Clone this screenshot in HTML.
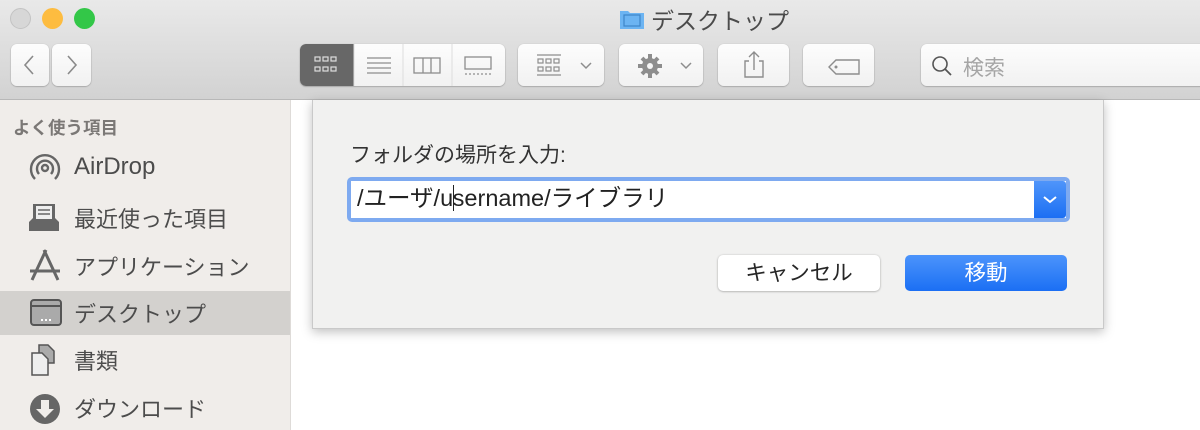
<!DOCTYPE html>
<html><head><meta charset="utf-8"><style>
*{box-sizing:border-box;margin:0;padding:0}
body{width:1200px;height:430px;overflow:hidden;position:relative;background:#fff;font-family:"Liberation Sans","Noto Sans CJK JP",sans-serif}
.tb{position:absolute;left:0;top:0;width:1200px;height:100px;background:linear-gradient(#e9e9e9,#d2d2d2);border-bottom:1px solid #b8b8b8}
.tl{position:absolute;top:8px;width:21px;height:21px;border-radius:50%}
.btn{position:absolute;top:44px;height:42px;background:linear-gradient(#fdfdfd,#f1f1f1);border-radius:6px;box-shadow:0 0.5px 1.5px rgba(0,0,0,.35)}
.ttl{position:absolute;left:651px;top:2px;font-size:23px;color:#4b4b4b}
.sb{position:absolute;left:0;top:100px;width:291px;height:330px;background:#f0edea;border-right:1px solid #dedbd8}
.it{position:absolute;left:74px;font-size:22px;color:#4c4c4c}
.it.l{font-size:24px;top:53px}
.ic{position:absolute;left:28px}
.dlg{position:absolute;left:312px;top:100px;width:792px;height:229px;background:#f1f1f0;box-shadow:0 3px 10px rgba(0,0,0,.25);border:1px solid #c9c9c9;border-top:none}
</style></head><body>
<div class="tb">
<div class="tl" style="left:10px;background:#d7d7d7;border:1px solid #c3c3c3"></div>
<div class="tl" style="left:42px;background:#fdbc40"></div>
<div class="tl" style="left:74px;background:#33c748"></div>
<svg style="position:absolute;left:619px;top:8px" width="26" height="22"><path d="M1 3h8l2 2h14v16H1z" fill="#6cb4f2"/><rect x="5" y="7" width="16" height="11" fill="none" stroke="#3e86c9" stroke-width="1.2"/></svg>
<div class="ttl">デスクトップ</div>
<div class="btn" style="left:11px;width:38px"><svg width="38" height="42"><path d="M22 12l-8 9 8 9" fill="none" stroke="#8a8a8a" stroke-width="1.6"/></svg></div>
<div class="btn" style="left:52px;width:39px"><svg width="39" height="42"><path d="M16 12l8 9-8 9" fill="none" stroke="#8a8a8a" stroke-width="1.6"/></svg></div>
<div class="btn" style="left:300px;width:205px;overflow:hidden">
<svg width="205" height="42"><rect x="0" y="0" width="54" height="42" fill="#676767"/>
<g fill="none" stroke="#ddd" stroke-width="1.2"><rect x="15" y="13" width="5" height="4"/><rect x="23" y="13" width="5" height="4"/><rect x="31" y="13" width="5" height="4"/><rect x="15" y="23" width="5" height="4"/><rect x="23" y="23" width="5" height="4"/><rect x="31" y="23" width="5" height="4"/></g>
<g stroke="#8d8d8d" stroke-width="1.3" fill="none"><path d="M67 14h24M67 19h24M67 24h24M67 29h24"/><rect x="114" y="14" width="26" height="15"/><path d="M123 14v15M131 14v15"/><rect x="165" y="13" width="26" height="12"/><path d="M165 30h26" stroke-dasharray="2 2"/></g>
<path d="M54 0v42M103 0v42M152 0v42" stroke="#ddd"/></svg></div>
<div class="btn" style="left:518px;width:86px"><svg width="86" height="42"><g stroke="#8d8d8d" stroke-width="1.2" fill="none"><path d="M19 11h24M19 31h24"/><rect x="20" y="15" width="5" height="4"/><rect x="28" y="15" width="5" height="4"/><rect x="36" y="15" width="5" height="4"/><rect x="20" y="23" width="5" height="4"/><rect x="28" y="23" width="5" height="4"/><rect x="36" y="23" width="5" height="4"/><path d="M63 19l5 5 5-5" stroke-width="1.5"/></g></svg></div>
<div class="btn" style="left:619px;width:84px"><svg width="84" height="42"><circle cx="31" cy="22" r="8" fill="#8d8d8d"/><g stroke="#8d8d8d" stroke-width="4"><path d="M31 10v24M19 22h24M23 14l16 16M39 14l-16 16"/></g><circle cx="31" cy="22" r="3" fill="#f5f5f5"/><path d="M62 19l5 5 5-5" fill="none" stroke="#8d8d8d" stroke-width="1.5"/></svg></div>
<div class="btn" style="left:718px;width:71px"><svg width="71" height="42"><path d="M31 17h-4v16h18V17h-4M36 26V8M31 13l5-5 5 5" fill="none" stroke="#8d8d8d" stroke-width="1.4"/></svg></div>
<div class="btn" style="left:803px;width:71px"><svg width="71" height="42"><path d="M26 23l7-7h23v14H33z" fill="none" stroke="#8d8d8d" stroke-width="1.4"/><circle cx="33" cy="23" r="1.5" fill="#8d8d8d"/></svg></div>
<div class="btn" style="left:921px;width:290px"><svg style="position:absolute;left:8px;top:9px" width="26" height="26"><circle cx="11" cy="11" r="7" fill="none" stroke="#555" stroke-width="1.6"/><path d="M16 16l6 6" stroke="#555" stroke-width="1.8"/></svg><span style="position:absolute;left:42px;top:8px;font-size:21px;color:#a5a5a5">検索</span></div>
</div>
<div class="sb">
<div style="position:absolute;left:13px;top:15px;font-size:17.5px;font-weight:bold;color:#7b7876">よく使う項目</div>
<div style="position:absolute;left:0;top:191px;width:290px;height:44px;background:#d3d1ce"></div>
<svg class="ic" style="top:52px" width="36" height="34"><g fill="none" stroke="#666" stroke-width="2.4"><circle cx="17" cy="16" r="3"/><path d="M11 22a8 8 0 1 1 12 0M7 27a14 14 0 1 1 20 0"/></g></svg>
<div class="it l">AirDrop</div>
<svg class="ic" style="top:100px" width="36" height="34"><path d="M5 4h22v14l4 4v9H1v-9l4-4z" fill="#666"/><rect x="8" y="6" width="16" height="13" fill="#eee"/><path d="M10 10h12M10 14h12" stroke="#666" stroke-width="1.5"/></svg>
<div class="it" style="top:102px">最近使った項目</div>
<svg class="ic" style="top:147px" width="36" height="36"><path d="M16 3l14 30M18 3L4 33M2 24h30" stroke="#666" stroke-width="3" fill="none"/></svg>
<div class="it" style="top:150px">アプリケーション</div>
<svg class="ic" style="top:198px" width="36" height="30"><rect x="3" y="2" width="30" height="25" rx="3" fill="#aaa" stroke="#555" stroke-width="2"/><path d="M3 8h30" stroke="#555" stroke-width="2"/><path d="M13 22h10" stroke="#fff" stroke-width="2" stroke-dasharray="2 2"/></svg>
<div class="it" style="top:197px">デスクトップ</div>
<svg class="ic" style="top:243px" width="36" height="36"><path d="M11 2h9l6 6v12H11z" fill="#aaa" stroke="#555" stroke-width="1.5"/><path d="M4 10h10l6 6v16H4z" fill="#eee" stroke="#555" stroke-width="1.5"/></svg>
<div class="it" style="top:244px">書類</div>
<svg class="ic" style="top:292px" width="36" height="34"><circle cx="17" cy="17" r="15" fill="#666"/><path d="M13 8h8v9h5l-9 9-9-9h5z" fill="#f0edea"/></svg>
<div class="it" style="top:292px">ダウンロード</div>
</div>
<div class="dlg">
<div style="position:absolute;left:37px;top:39px;font-size:21px;color:#333">フォルダの場所を入力:</div>
<div style="position:absolute;left:34px;top:77px;width:723px;height:45px;border-radius:5px;background:#7eaaf0;padding:4px">
<div style="width:100%;height:100%;background:#fff;position:relative;font-size:23.5px;color:#222;padding:3px 6px;line-height:29px">/ユーザ/u<span style="border-left:1.5px solid #222;margin-right:-1.5px"></span>sername/ライブラリ
<div style="position:absolute;right:0;top:0;width:32px;height:100%;background:linear-gradient(#4f95fa,#1c6ff3);border-radius:0 3px 3px 0"><svg width="32" height="37"><path d="M10 16l6 5 6-5" fill="none" stroke="#fff" stroke-width="2"/></svg></div></div></div>
<div style="position:absolute;left:405px;top:155px;width:162px;height:36px;background:#fff;border-radius:5px;box-shadow:0 0.5px 2px rgba(0,0,0,.35);text-align:center;font-size:21.5px;line-height:36px;color:#262626">キャンセル</div>
<div style="position:absolute;left:592px;top:155px;width:162px;height:36px;background:linear-gradient(#4c94fb,#1b6ff4);border-radius:5px;text-align:center;font-size:21.5px;line-height:36px;color:#fff">移動</div>
</div>
</body></html>
